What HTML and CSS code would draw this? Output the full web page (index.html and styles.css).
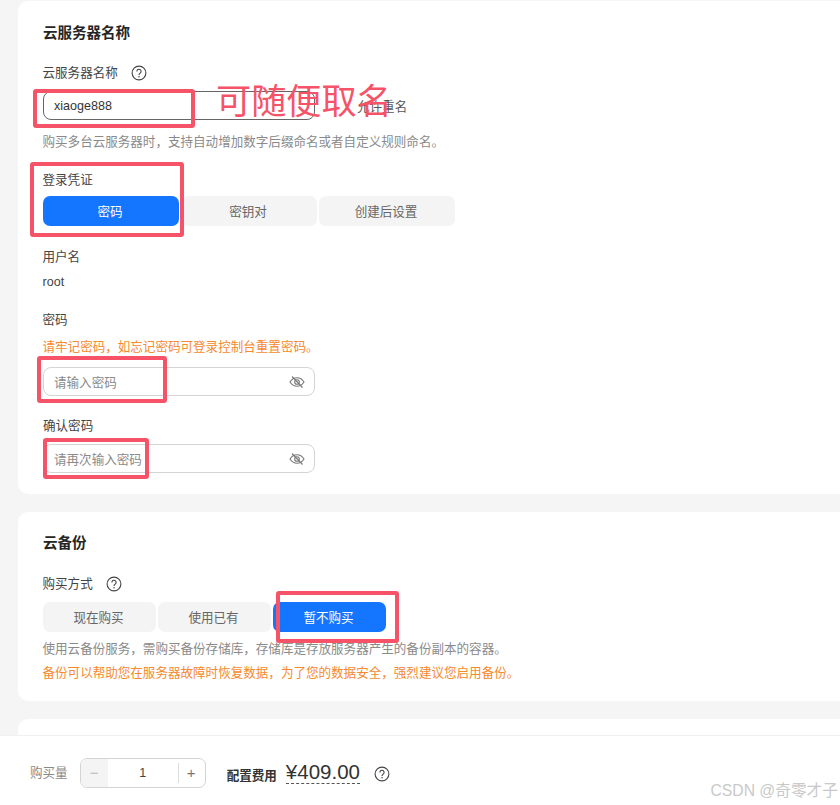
FILE: index.html
```html
<!DOCTYPE html>
<html lang="zh-CN">
<head>
<meta charset="utf-8">
<title>云服务器</title>
<link rel="stylesheet" href="styles.css">
</head>
<body>
<svg class="defs" width="0" height="0">
  <symbol id="help" viewBox="0 0 16 16"><circle cx="8" cy="8" r="6.9" fill="none" stroke="currentColor" stroke-width="1.1"/><path d="M5.9 6.4a2.1 2.1 0 1 1 3.3 1.7c-.8.6-1.2 1-1.2 1.9" fill="none" stroke="currentColor" stroke-width="1.1"/><circle cx="8" cy="11.8" r=".75" fill="currentColor"/></symbol>
  <symbol id="eye" viewBox="0 0 16 16"><path d="M1 8c1.8-2.8 4.2-4.2 7-4.2s5.200 1.400 7 4.200c-1.800 2.800-4.200 4.200-7 4.200S2.800 10.800 1 8z" fill="none" stroke="currentColor" stroke-width="1.1"/><circle cx="8" cy="8" r="2.300" fill="none" stroke="currentColor" stroke-width="1.1"/><path d="M3 2.500 13.500 13.500" fill="none" stroke="currentColor" stroke-width="1.1"/></symbol>
</svg>
<main class="page">
  <section class="card card-server">
    <h2 class="card-title">云服务器名称</h2>
    <div class="label label-help">云服务器名称<svg class="help"><use href="#help"/></svg></div>
    <div class="name-row">
      <div class="input input-active"><span class="value">xiaoge888</span></div>
      <span class="check-text">允许重名</span>
    </div>
    <p class="hint hint-name">购买多台云服务器时，支持自动增加数字后缀命名或者自定义规则命名。</p>
    <div class="label label-cred">登录凭证</div>
    <div class="segments segments-cred">
      <button class="seg seg-on">密码</button>
      <button class="seg">密钥对</button>
      <button class="seg">创建后设置</button>
    </div>
    <div class="label label-user">用户名</div>
    <div class="root">root</div>
    <div class="label label-pass">密码</div>
    <p class="warn warn-pass">请牢记密码，如忘记密码可登录控制台重置密码。</p>
    <div class="input"><span class="placeholder">请输入密码</span><svg class="eye"><use href="#eye"/></svg></div>
    <div class="label label-confirm">确认密码</div>
    <div class="input"><span class="placeholder">请再次输入密码</span><svg class="eye"><use href="#eye"/></svg></div>
  </section>
  <section class="card card-backup">
    <h2 class="card-title">云备份</h2>
    <div class="label label-help">购买方式<svg class="help"><use href="#help"/></svg></div>
    <div class="segments segments-backup">
      <button class="seg">现在购买</button>
      <button class="seg">使用已有</button>
      <button class="seg seg-on">暂不购买</button>
    </div>
    <p class="hint hint-backup">使用云备份服务，需购买备份存储库，存储库是存放服务器产生的备份副本的容器。</p>
    <p class="warn warn-backup">备份可以帮助您在服务器故障时恢复数据，为了您的数据安全，强烈建议您启用备份。</p>
  </section>
  <section class="card card-next"></section>
</main>
<footer class="footer">
  <span class="qty-label">购买量</span>
  <div class="stepper">
    <span class="step step-off">−</span>
    <span class="qty">1</span>
    <span class="step step-plus">+</span>
  </div>
  <span class="fee-label">配置费用</span>
  <span class="price">¥409.00</span>
  <svg class="help help-fee"><use href="#help"/></svg>
</footer>
<div class="mark mark-name"></div>
<div class="mark mark-cred"></div>
<div class="mark mark-pass"></div>
<div class="mark mark-confirm"></div>
<div class="mark mark-skip"></div>
<div class="note">可随便取名</div>
<div class="watermark">CSDN @奇零才子</div>
</body>
</html>
```
FILE: styles.css
```css
* { box-sizing: border-box; }
html, body { margin: 0; height: 805px; overflow: hidden; }
body {
  position: relative;
  background: #f5f5f5;
  color: #333;
  font-family: "Liberation Sans", "Noto Sans CJK SC", sans-serif;
  font-size: 12.55px;
}
.defs { position: absolute; }
.page { display: flex; flex-direction: column; gap: 18px; padding: 1px 0 0 18px; width: 860px; }
.card { background: #fff; border-radius: 10px; padding: 0 25px; }
.card-server { height: 493px; }
.card-backup { height: 189px; }
.card-next { height: 60px; }
.card-title { margin: 0; padding-top: 22px; font-size: 14.5px; line-height: 20px; font-weight: 700; color: #252525; }
.card-backup .card-title { padding-top: 21px; }
.card-backup .label-help { margin-top: 22px; }
.label { line-height: 18px; color: #444; margin-left: -0.5px; }
.label-help { display: flex; align-items: center; margin-top: 21px; }
.help { width: 16px; height: 16px; margin-left: 13px; color: #444; }
.name-row { display: flex; align-items: center; margin-top: 9px; }
.input { display: flex; align-items: center; justify-content: space-between; width: 272px; height: 29px; padding: 0 9px 0 10px; border: 1px solid #d4d4d4; border-radius: 8px; background: #fff; }
.input-active { border-color: #666; }
.value { color: #333; }
.check-text { margin-left: 42px; color: #555; }
.placeholder { color: #8a8a8a; margin-top: -1px; }
.eye { width: 16px; height: 16px; color: #777; }
.hint, .warn { margin: 0 0 0 -0.5px; line-height: 18px; }
.hint { color: #8a8a8a; }
.warn { color: #f58a2e; }
.hint-name { margin-top: 13px; }
.label-cred { margin-top: 20px; }
.segments { display: flex; gap: 2px; }
.segments-cred { margin-top: 7px; }
.segments-backup { margin-top: 9px; }
.seg { height: 30px; border: 0; border-radius: 7px; background: #f4f4f4; color: #666; font: inherit; padding: 0 2px 2px 0; }
.segments-cred .seg { width: 136px; }
.segments-backup .seg { width: 113px; }
.seg-on { background: #1476ff; color: #fff; }
.label-user { margin-top: 22px; }
.root { margin-top: 7px; line-height: 18px; color: #444; margin-left: -0.5px; }
.label-pass { margin-top: 20px; }
.warn-pass { margin-top: 9px; margin-bottom: 11px; }
.label-confirm { margin: 21px 0 9px; }
.hint-backup { margin-top: 8px; }
.warn-backup { margin-top: 6px; }
.footer {
  position: absolute;
  left: 0; right: 0; top: 735px; height: 70px;
  display: flex; align-items: center;
  padding: 4px 0 0 30px;
  background: #fff;
  border-top: 1px solid #f0f0f0;
}
.qty-label { color: #8a8a8a; margin-top: -2px; }
.stepper { display: flex; align-items: stretch; width: 126px; height: 30px; margin-left: 12px; border: 1px solid #d4d4d4; border-radius: 7px; overflow: hidden; }
.step { width: 27px; display: flex; align-items: center; justify-content: center; font-size: 15px; color: #777; }
.step-off { background: #f4f4f4; color: #bbb; }
.qty { flex: 1; display: flex; align-items: center; justify-content: center; color: #444; }
.step-plus { position: relative; }
.step-plus::before { content: ""; position: absolute; left: 0; top: 4px; bottom: 4px; border-left: 1px solid #ddd; }
.fee-label { margin-left: 21px; margin-top: 4px; font-weight: 700; color: #333; }
.price { margin: -2px 0 0 9px; font-size: 20.500px; line-height: 23px; color: #333; border-bottom: 1px dashed #555; }
.help-fee { margin-left: 14px; margin-top: 2px; }
.mark { position: absolute; border: 4px solid #f65369; border-radius: 3px; }
.mark-name { left: 33px; top: 89px; width: 162px; height: 39px; }
.mark-cred { left: 30px; top: 162px; width: 154px; height: 75px; }
.mark-pass { left: 37px; top: 356px; width: 130px; height: 47px; }
.mark-confirm { left: 43px; top: 438px; width: 106px; height: 41px; }
.mark-skip { left: 276px; top: 591px; width: 123px; height: 52px; }
.note { position: absolute; left: 216px; top: 77px; font-size: 35.2px; line-height: 44px; color: #f65369; font-family: "Noto Sans CJK SC", sans-serif; }
.watermark { position: absolute; right: 2px; top: 780px; font-size: 15.7px; line-height: 22px; color: #c9c9c9; }
```
